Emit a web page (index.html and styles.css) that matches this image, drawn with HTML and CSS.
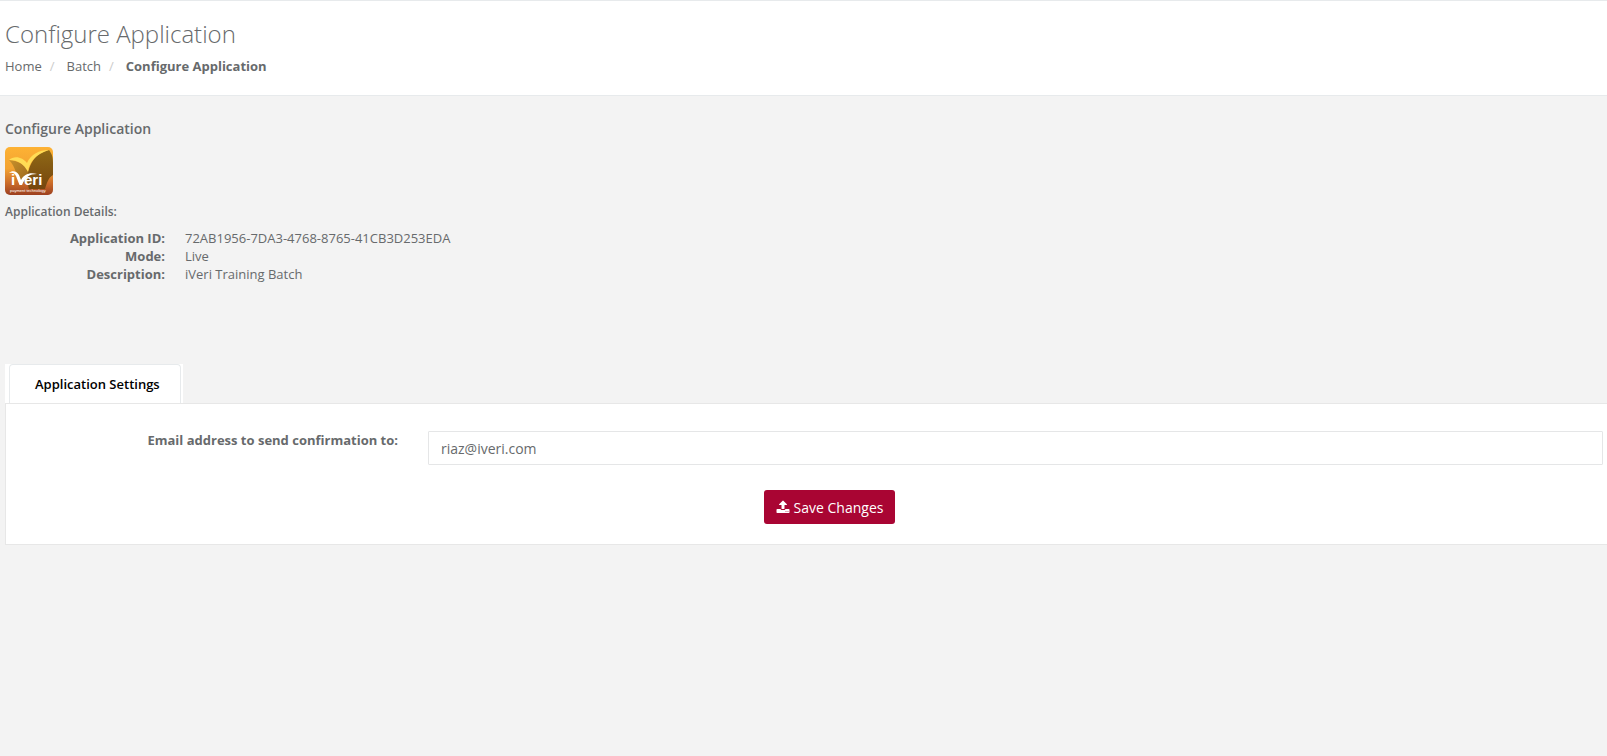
FILE: index.html
```
<!DOCTYPE html>
<html lang="en">
<head>
  <meta charset="UTF-8" />
  <meta name="viewport" content="width=device-width, initial-scale=1.0" />
  <title>Configure Application</title>
  <link rel="stylesheet" href="styles.css">
</head>
<body>
  <header class="page-heading">
    <h1>Configure Application</h1>
    <ol class="breadcrumb">
      <li><a href="#">Home</a></li>
      <li><a href="#">Batch</a></li>
      <li class="active">Configure Application</li>
    </ol>
  </header>

  <main class="wrapper">
    <h2>Configure Application</h2>
    <svg class="logo" viewBox="0 0 48 48" role="img" aria-label="iVeri payment technology">
      <defs>
        <linearGradient id="logo-bg" x1="0" y1="0" x2="0" y2="1">
          <stop offset="0" stop-color="#fdb234" />
          <stop offset="0.45" stop-color="#f3a332" />
          <stop offset="0.75" stop-color="#cb6c29" />
          <stop offset="1" stop-color="#9c4020" />
        </linearGradient>
        <linearGradient id="logo-leaf" x1="0" y1="0" x2="0" y2="1">
          <stop offset="0" stop-color="#8f6916" />
          <stop offset="1" stop-color="#76450e" />
        </linearGradient>
        <linearGradient id="logo-wing" x1="0" y1="0" x2="1" y2="1">
          <stop offset="0" stop-color="#c8912b" />
          <stop offset="1" stop-color="#96621b" />
        </linearGradient>
        <clipPath id="logo-clip"><rect width="48" height="48" rx="5" /></clipPath>
      </defs>
      <g clip-path="url(#logo-clip)">
        <rect width="48" height="48" fill="url(#logo-bg)" />
        <path d="M4 13C14 14 21 18 24 25C26 29 25 33 24 38L15 34C11 29 11 20 4 13Z" fill="url(#logo-wing)" />
        <path d="M44 3C47 7 48 10 48 16V28C43 31 42 36 40 42H24C20 27 25 7 44 3Z" fill="url(#logo-leaf)" />
        <path d="M4 13C9 8 18 10 22 16C26 7 34 3 44 3C31 7 24 15 23 25C19 17 13 13 4 13Z" fill="#ffdc55" />
        <path d="M4 26C7 23 12 24 14 28L16 33C19 27 25 25 32 27C25 27 20 30 17 38H14.500L11 29C10 26 7 25 4 26Z" fill="#fff" />
        <text class="logo-name" x="6" y="38">i</text>
        <text class="logo-name" x="19" y="38">eri</text>
        <text class="logo-tagline" x="5" y="45">payment technology</text>
      </g>
    </svg>
    <h3>Application Details:</h3>
    <dl class="details">
      <dt>Application ID:</dt>
      <dd>72AB1956-7DA3-4768-8765-41CB3D253EDA</dd>
      <dt>Mode:</dt>
      <dd>Live</dd>
      <dt>Description:</dt>
      <dd>iVeri Training Batch</dd>
    </dl>

    <div class="tabs">
      <a class="tab" href="#settings">Application Settings</a>
    </div>
    <form class="panel" id="settings">
      <div class="form-group">
        <label for="email">Email address to send confirmation to:</label>
        <input type="email" id="email" name="email" value="riaz@iveri.com" />
      </div>
      <div class="form-actions">
        <button type="submit" class="save-btn">
          <svg class="icon" viewBox="0 0 1792 1792" aria-hidden="true"><path d="M1344 1472q0-26-19-45t-45-19-45 19-19 45 19 45 45 19 45-19 19-45zm256 0q0-26-19-45t-45-19-45 19-19 45 19 45 45 19 45-19 19-45zm128-224v320q0 40-28 68t-68 28h-1472q-40 0-68-28t-28-68v-320q0-40 28-68t68-28h427q21 56 70.5 92t110.5 36h256q61 0 110.5-36t70.5-92h427q40 0 68 28t28 68zm-325-648q-17 40-59 40h-256v448q0 26-19 45t-45 19h-256q-26 0-45-19t-19-45v-448h-256q-42 0-59-40-17-39 14-69l448-448q18-19 45-19t45 19l448 448q31 30 14 69z" /></svg>
          Save Changes
        </button>
      </div>
    </form>
  </main>
</body>
</html>
```
FILE: styles.css
```
* {
  box-sizing: border-box;
}
body {
  margin: 0;
  font-family: "Open Sans", Arial, sans-serif;
  font-size: 13px;
  line-height: 18px;
  color: #676a6c;
  background-color: #f3f3f3;
}
a {
  color: inherit;
  text-decoration: none;
}
.page-heading {
  background-color: #fff;
  border-top: 1px solid #e7eaec;
  border-bottom: 1px solid #e7eaec;
  padding: 20px 5px;
}
.page-heading h1 {
  margin: 0 0 10px;
  font-size: 24px;
  font-weight: 300;
  line-height: 26px;
}
.breadcrumb {
  display: flex;
  list-style: none;
  margin: 0;
  padding: 0;
}
.breadcrumb li + li::before {
  content: "/";
  padding: 0 12px 0 8px;
  color: #ccc;
  font-weight: 400;
}
.breadcrumb .active {
  font-weight: 700;
}
.wrapper {
  padding: 24px 0 0 5px;
}
.wrapper h2 {
  margin: 0 0 9px;
  font-size: 14px;
  font-weight: 600;
  line-height: 18px;
}
.logo {
  display: block;
  width: 48px;
  height: 48px;
}
.logo-name {
  font-family: "Liberation Sans", Arial, sans-serif;
  font-size: 15px;
  font-weight: 700;
  fill: #fff;
}
.logo-tagline {
  font-family: "Liberation Sans", Arial, sans-serif;
  font-size: 4px;
  fill: #fff;
}
.wrapper h3 {
  margin: 8px 0;
  font-size: 12px;
  font-weight: 600;
  line-height: 18px;
}
.details {
  display: grid;
  grid-template-columns: 160px 1fr;
  column-gap: 20px;
  margin: 0 0 81px;
}
.details dt {
  font-weight: 700;
  text-align: right;
}
.details dd {
  margin: 0;
}
.tabs {
  display: flex;
  width: fit-content;
  padding: 0 2px 0 4px;
  background-color: #fff;
}
.tab {
  padding: 10px 20px 10px 25px;
  border: 1px solid #e7eaec;
  border-bottom: 0;
  border-radius: 4px 4px 0 0;
  font-weight: 600;
  color: #000;
}
.panel {
  background-color: #fff;
  border: 1px solid #e7e7e7;
  border-right: 0;
  padding: 27px 4px 20px 0;
}
.form-group {
  display: grid;
  grid-template-columns: 392px 1fr;
  column-gap: 30px;
}
.form-group label {
  font-weight: 700;
  text-align: right;
}
.form-group input {
  height: 34px;
  padding: 6px 12px;
  border: 1px solid #e5e6e7;
  border-radius: 1px;
  font-family: inherit;
  font-size: 14px;
  color: inherit;
  background-color: #fff;
}
.form-actions {
  display: flex;
  justify-content: center;
  margin-top: 25px;
  padding-left: 50px;
}
.save-btn {
  display: flex;
  align-items: center;
  gap: 4px;
  height: 34px;
  padding: 0 12px;
  border: 0;
  border-radius: 3px;
  font-family: inherit;
  font-size: 14px;
  color: #fff;
  background-color: #a90533;
  cursor: pointer;
}
.icon {
  width: 14px;
  height: 14px;
  fill: currentColor;
}
```
